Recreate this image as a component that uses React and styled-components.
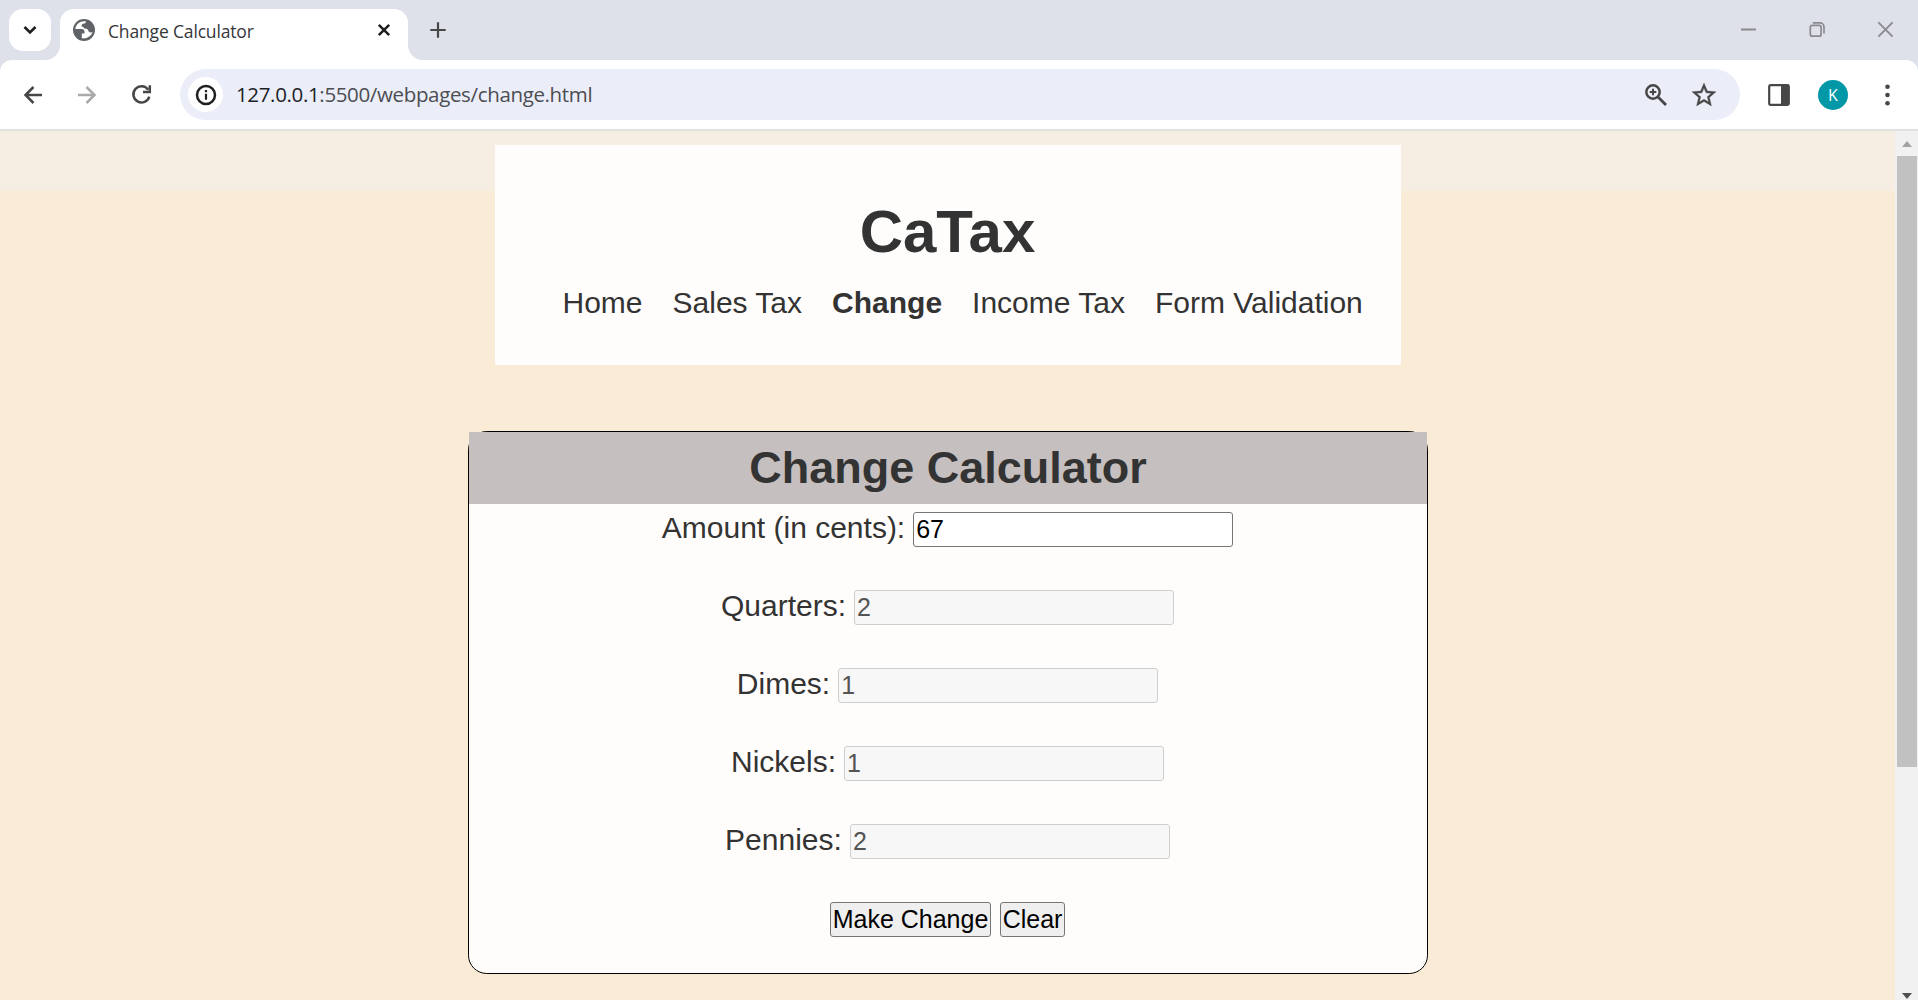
import React from "react";
import styled, { createGlobalStyle } from "styled-components";

const GlobalStyle = createGlobalStyle`
  * { box-sizing: border-box; }
  body { margin: 0; overflow: hidden; background: #faebd7; }
`;

const Window = styled.div`
  width: 1918px;
  height: 1000px;
  display: flex;
  flex-direction: column;
  overflow: hidden;
  font-family: "Liberation Sans", Arial, sans-serif;
`;

const Ico = styled.svg`
  display: block;
  flex: none;
  overflow: visible;
  fill: none;
  stroke: ${(p) => p.$color || "#474747"};
  stroke-width: ${(p) => p.$w || 2.5};
`;

/* ---- tab strip ---- */
const TabStrip = styled.div`
  height: 60px;
  flex: none;
  display: flex;
  padding: 9px 0 0 9px;
  background: #dee1e9;
`;

const TabSearch = styled.div`
  width: 42px;
  height: 42px;
  border-radius: 14px;
  background: #fff;
  display: flex;
  align-items: center;
  justify-content: center;
`;

const Tab = styled.div`
  position: relative;
  width: 348px;
  height: 51px;
  margin-left: 9px;
  padding: 0 18px 9px 13px;
  border-radius: 14px 14px 0 0;
  background: #fff;
  display: flex;
  align-items: center;

  &::before,
  &::after {
    content: "";
    position: absolute;
    bottom: 0;
    width: 15px;
    height: 15px;
  }
  &::before {
    left: -15px;
    background: radial-gradient(circle at 0 0, transparent 14.5px, #fff 15.5px);
  }
  &::after {
    right: -15px;
    background: radial-gradient(circle at 100% 0, transparent 14.5px, #fff 15.5px);
  }
`;

const TabTitle = styled.span`
  flex: 1;
  margin-left: 13px;
  padding-top: 2px;
  font: 400 17.5px/24px "Open Sans", sans-serif;
  letter-spacing: -0.16px;
  color: #36373a;
  white-space: nowrap;
`;

const NewTab = styled.div`
  width: 42px;
  height: 42px;
  margin-left: 9px;
  display: flex;
  align-items: center;
  justify-content: center;
`;

const WindowControls = styled.div`
  margin-left: auto;
  margin-right: -2px;
  height: 40px;
  display: flex;
`;

const WindowButton = styled.div`
  width: 68.5px;
  display: flex;
  align-items: center;
  justify-content: center;
`;

/* ---- toolbar ---- */
const ToolbarWrap = styled.div`
  flex: none;
  background: #dee1e9;
`;

const Toolbar = styled.div`
  height: 71px;
  display: flex;
  align-items: center;
  padding: 0 4px 0 6px;
  border-bottom: 2px solid #dfe2e1;
  border-radius: 12px 12px 0 0;
  background: #fff;
`;

const ToolButton = styled.div`
  width: 54px;
  height: 51px;
  flex: none;
  display: flex;
  align-items: center;
  justify-content: center;
`;

const AddressBar = styled.div`
  flex: 1;
  height: 51px;
  margin: 0 12px;
  padding: 0 24px 0 8px;
  border-radius: 26px;
  background: #ebeef8;
  display: flex;
  align-items: center;
`;

const SiteInfo = styled.div`
  width: 35px;
  height: 35px;
  border-radius: 50%;
  background: #fff;
  display: flex;
  align-items: center;
  justify-content: center;
`;

const Url = styled.span`
  flex: 1;
  margin: -1px 0 0 13px;
  font: 400 20.5px/30px "Open Sans", sans-serif;
  letter-spacing: -0.35px;
  color: #4b4d52;
  white-space: nowrap;
`;

const Host = styled.span`
  color: #202226;
`;

const AddressIcons = styled.div`
  display: flex;
  align-items: center;
  gap: 25px;
`;

const Avatar = styled.div`
  width: 30px;
  height: 30px;
  border-radius: 50%;
  background: #0097a7;
  color: #fff;
  text-align: center;
  font: 400 16px/30px "Open Sans", sans-serif;
`;

/* ---- page ---- */
const Viewport = styled.div`
  flex: 1;
  min-height: 0;
  display: flex;
`;

const Page = styled.main`
  width: 1895px;
  display: flex;
  flex-direction: column;
  align-items: center;
  padding-top: 14px;
  color: #333;
  font-size: 30px;
  background: linear-gradient(#f6eee3 60px, #faebd7 60px);
`;

const SiteHeader = styled.header`
  width: 906px;
  height: 220px;
  flex: none;
  padding: 52px 0 0;
  background: #fffdfb;
`;

const SiteTitle = styled.h1`
  margin: 0;
  text-align: center;
  font-size: 60px;
  line-height: 69px;
`;

const Nav = styled.nav`
  display: flex;
  gap: 30px;
  margin-top: 20px;
  padding-left: 68px;
  line-height: 34px;
  white-space: nowrap;
`;

const NavLink = styled.a`
  color: #333;
  font-weight: ${(p) => (p.$current ? 700 : 400)};
`;

const Card = styled.section`
  width: 960px;
  height: 543px;
  flex: none;
  margin: 66px 0 0 1px;
  border: 1px solid #000;
  border-radius: 18.75px;
  background: #fffdfb;
`;

const CardTitle = styled.h2`
  margin: 0;
  height: 72px;
  padding-top: 10px;
  background: #c5bfbf;
  text-align: center;
  font-size: 45px;
  line-height: 52px;
`;

const Rows = styled.form`
  margin: 8px 0 0;
  padding-right: 1px;
  display: flex;
  flex-direction: column;
  gap: 43px;
`;

const Row = styled.div`
  height: 35px;
  display: flex;
  justify-content: center;
  gap: ${(p) => p.$gap || 8}px;
`;

const Label = styled.label`
  line-height: 34px;
  margin-top: -1px;
  white-space: nowrap;
`;

const Field = styled.input`
  width: 320px;
  height: 35px;
  margin: 0;
  padding: 1px 2px;
  border: 1px solid #767676;
  border-radius: 3px;
  background: #fff;
  color: #000;
  font: 25px/29px "Liberation Sans", Arial, sans-serif;

  &:disabled {
    border-color: #cfcfcf;
    background: #f7f7f7;
    color: #545454;
  }
`;

const Button = styled.button`
  height: 35px;
  width: ${(p) => p.$width}px;
  margin: 0;
  padding: 0;
  border: 1px solid #767676;
  border-radius: 3px;
  background: #efefef;
  color: #000;
  white-space: nowrap;
  font: 25px/29px "Liberation Sans", Arial, sans-serif;
`;

const Scrollbar = styled.div`
  width: 23px;
  display: flex;
  flex-direction: column;
  align-items: center;
  justify-content: space-between;
  padding: 10px 1px 1px 2px;
  background: #f1f1f1;
`;

const Thumb = styled.div`
  width: 20px;
  height: 611px;
  margin: 9px 0 auto;
  background: #c1c1c1;
`;

const links = ["Home", "Sales Tax", "Change", "Income Tax", "Form Validation"];
const coins = [
  ["Quarters", 2],
  ["Dimes", 1],
  ["Nickels", 1],
  ["Pennies", 2],
];

export default function App() {
  return (
    <Window>
      <GlobalStyle />
      <TabStrip>
        <TabSearch>
          <Ico width="14" height="10" $color="#1f1f1f" $w="2.6">
            <path d="M1.5 2 7 7.5 12.5 2" />
          </Ico>
        </TabSearch>
        <Tab>
          <Ico width="22" height="22" $color="none">
            <circle cx="11" cy="11" r="11" fill="#5f6368" />
            <path
              fill="#fff"
              d="M13 2.500C8 1.500 3 4.500 2.300 10H8.500c2 0 3 1 3 3v1.500H8.800v4.800c5 .8 9.800-2.300 10.700-6.300-1.200.9-3.400.5-4-1-.6-2-2-2.400-4.500-2.400 0-1.200-1-2-2.400-2 0-2 .8-3 2.300-3 1.300 0 2-.6 2.100-2.100z"
            />
          </Ico>
          <TabTitle>Change Calculator</TabTitle>
          <Ico width="12" height="12" $color="#1f1f1f" $w="2.5">
            <path d="M.8.8 11.200 11.200M11.200.8.8 11.200" />
          </Ico>
        </Tab>
        <NewTab>
          <Ico width="16" height="16" $w="2.2">
            <path d="M8 .3v15.400M.3 8h15.400" />
          </Ico>
        </NewTab>
        <WindowControls>
          <WindowButton>
            <Ico width="15" height="15" $color="#8a8b8f" $w="2">
              <path d="M0 7.500h15" />
            </Ico>
          </WindowButton>
          <WindowButton>
            <Ico width="15" height="15" $color="#8a8b8f" $w="1.700">
              <rect x=".3" y="3.400" width="10.800" height="10.800" rx="2" />
              <path d="M2.800.9h7.200a4 4 0 0 1 4 4v6.700" />
            </Ico>
          </WindowButton>
          <WindowButton>
            <Ico width="15" height="15" $color="#8a8b8f" $w="1.900">
              <path d="M.4.4 14.600 14.600M14.600.4.4 14.600" />
            </Ico>
          </WindowButton>
        </WindowControls>
      </TabStrip>

      <ToolbarWrap>
        <Toolbar>
          <ToolButton>
            <Ico width="18" height="18">
              <path d="M18 9H1.800M9.500 1 1.500 9l8 8" />
            </Ico>
          </ToolButton>
          <ToolButton>
            <Ico width="18" height="18" $color="#a9a9a9">
              <path d="M0 9h16.200M8.500 1l8 8-8 8" />
            </Ico>
          </ToolButton>
          <ToolButton>
            <Ico width="19" height="19">
              <path d="M16.200 4.800A8.100 8.100 0 1 0 17.300 11.600" />
              <path d="M17.800.3v6.800H11" />
            </Ico>
          </ToolButton>
          <AddressBar>
            <SiteInfo>
              <Ico width="20" height="20" $color="#1f1f1f">
                <circle cx="10" cy="10" r="9" />
                <path d="M10 8.800v6M10 5v2.300" strokeWidth="2.200" />
              </Ico>
            </SiteInfo>
            <Url>
              <Host>127.0.0.1</Host>:5500/webpages/change.html
            </Url>
            <AddressIcons>
              <Ico width="22" height="22">
                <circle cx="8" cy="8" r="6.700" />
                <path d="m12.800 12.800 8.200 8.200" strokeWidth="2.800" />
                <path d="M8 4.700v6.600M4.700 8h6.600" strokeWidth="2" />
              </Ico>
              <Ico width="24" height="23" viewBox="2 2 20 19" $w="0.300">
                <path
                  fill="#474747"
                  fillRule="evenodd"
                  d="M22 9.240l-7.190-.620L12 2 9.190 8.630 2 9.240l5.460 4.730L5.820 21 12 17.270 18.180 21l-1.630-7.030L22 9.240zM12 15.400l-3.760 2.270 1-4.280-3.320-2.880 4.380-.380L12 6.100l1.710 4.040 4.380.380-3.320 2.880 1 4.280L12 15.400z"
                />
              </Ico>
            </AddressIcons>
          </AddressBar>
          <ToolButton>
            <Ico width="22" height="22" $w="2.200">
              <rect x="1.200" y="1.200" width="19.600" height="19.600" rx="1.300" />
              <path d="M13 1h7v20h-7z" fill="#474747" stroke="none" />
            </Ico>
          </ToolButton>
          <ToolButton>
            <Avatar>K</Avatar>
          </ToolButton>
          <ToolButton>
            <Ico width="5" height="22" $color="none">
              <g fill="#474747">
                <circle cx="2.500" cy="2.700" r="2.300" />
                <circle cx="2.500" cy="11" r="2.300" />
                <circle cx="2.500" cy="19.300" r="2.300" />
              </g>
            </Ico>
          </ToolButton>
        </Toolbar>
      </ToolbarWrap>

      <Viewport>
        <Page>
          <SiteHeader>
            <SiteTitle>CaTax</SiteTitle>
            <Nav>
              {links.map((name) => (
                <NavLink key={name} $current={name === "Change"}>
                  {name}
                </NavLink>
              ))}
            </Nav>
          </SiteHeader>
          <Card>
            <CardTitle>Change Calculator</CardTitle>
            <Rows>
              <Row>
                <Label>Amount (in cents):</Label>
                <Field defaultValue="67" />
              </Row>
              {coins.map(([name, count]) => (
                <Row key={name}>
                  <Label>{name}:</Label>
                  <Field disabled value={count} readOnly />
                </Row>
              ))}
              <Row $gap={9}>
                <Button type="button" $width={161}>
                  Make Change
                </Button>
                <Button type="button" $width={65}>
                  Clear
                </Button>
              </Row>
            </Rows>
          </Card>
        </Page>
        <Scrollbar>
          <Ico width="10" height="6" $color="none">
            <path d="M0 6 5 0l5 6z" fill="#a3a3a3" />
          </Ico>
          <Thumb />
          <Ico width="10" height="6" $color="none">
            <path d="M0 0h10L5 6z" fill="#505050" />
          </Ico>
        </Scrollbar>
      </Viewport>
    </Window>
  );
}
